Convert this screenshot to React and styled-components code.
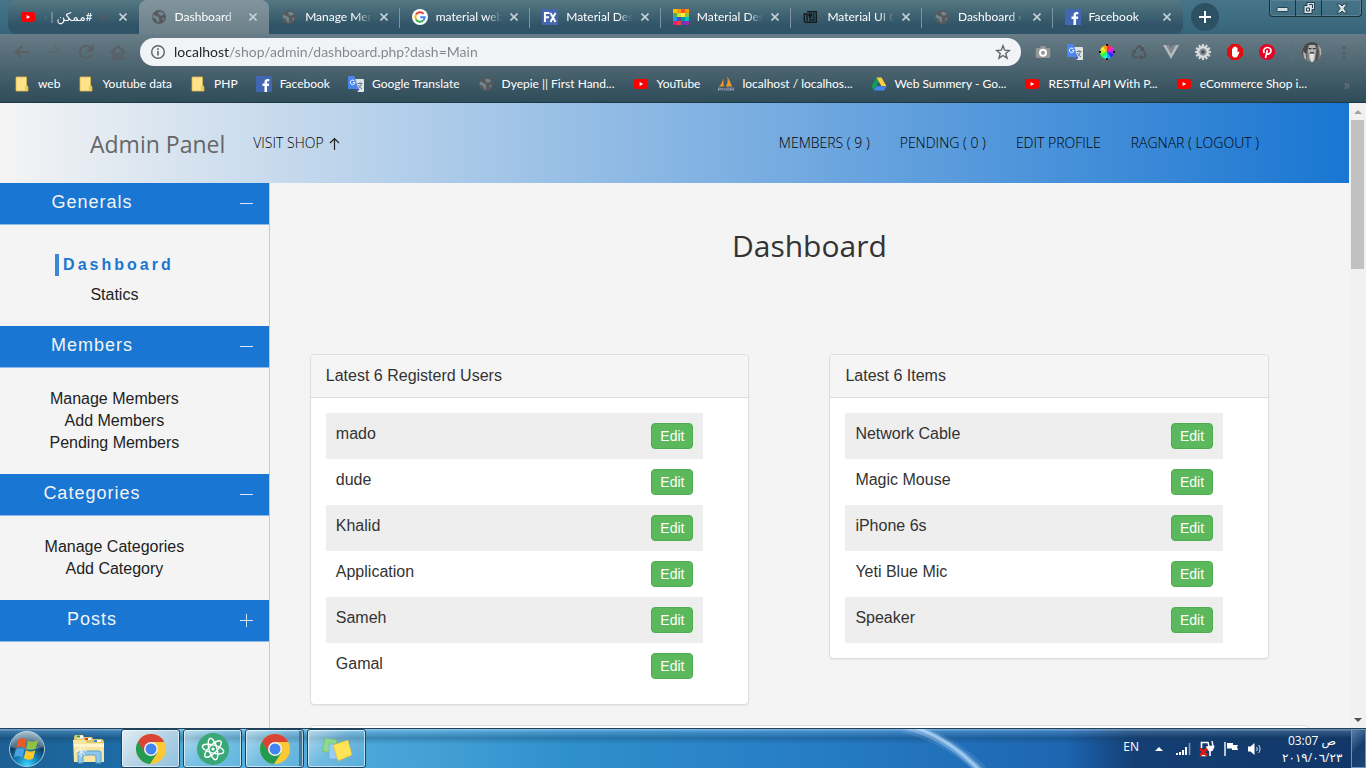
import React from "react";
import styled, { createGlobalStyle, css } from "styled-components";

const ui = `"Open Sans", "DejaVu Sans", sans-serif`;
const frame = `Lato, "DejaVu Sans", sans-serif`;
const sans = `"Liberation Sans", Arial, sans-serif`;

const Global = createGlobalStyle`
  *, *::before, *::after { box-sizing: border-box; }
  body { margin: 0; background: #f3f3f3; font-family: ${sans}; color: #333; }
  button { font: inherit; color: inherit; border: 0; padding: 0; background: none; cursor: pointer; }
  a { color: inherit; text-decoration: none; }
  ul { list-style: none; margin: 0; padding: 0; }
  svg { display: block; flex: none; }
`;

/* ---------- icons ---------- */

const Youtube = () => (
  <svg width="16" height="16" viewBox="0 0 16 16">
    <rect x="1" y="3" width="14" height="10" rx="2.4" fill="#f00" />
    <path d="M6.6 6v4l3.6-2z" fill="#fff" />
  </svg>
);
const Globe = () => (
  <svg width="16" height="16" viewBox="0 0 16 16">
    <circle cx="8" cy="8" r="7" fill="#57595c" />
    <path d="M2 5.500C3 6 4 6 5 7c1.500.5 3 .5 3 2S7.500 11 8.500 13.500C6.500 13.500 5.500 12 5 10 3.500 9.500 2 9 1.500 8zM7 3.500C9 2 12 3 13 5.500 12 6 10.500 5.500 10 7 8.500 7 9 5.500 7.500 5.500zM11 9.500l2.500-.8-1 3z" fill="#6f858f" />
  </svg>
);
const Google = () => (
  <svg width="16" height="16" viewBox="0 0 16 16">
    <circle cx="8" cy="8" r="8" fill="#fff" />
    <g fill="none" strokeWidth="2">
      <path d="M11.6 4.8A4.7 4.7 0 0 0 4 5.6" stroke="#ea4335" />
      <path d="M4 5.6a4.7 4.7 0 0 0 0 4.8" stroke="#fbbc05" />
      <path d="M4 10.4a4.7 4.7 0 0 0 7.3 1" stroke="#34a853" />
      <path d="M11.3 11.4A4.7 4.7 0 0 0 12.7 8.200H8.200" stroke="#4285f4" />
    </g>
  </svg>
);
const Fx = () => (
  <svg width="16" height="16" viewBox="0 0 16 16">
    <rect width="16" height="16" fill="#4666b0" />
    <path d="M3 13V4h4.500M3 8.300h4M8.500 4l5 9M13.500 4l-5 9" fill="none" stroke="#fff" strokeWidth="1.900" />
  </svg>
);
const mosaic = [
  "#ffc107", "#ff9800", "#ff5722", "#ff9800",
  "#4caf50", "#cddc39", "#ffeb3b", "#8bc34a",
  "#2196f3", "#3f51b5", "#009688", "#00bcd4",
  "#e91e63", "#f44336", "#673ab7", "#9c27b0",
];
const Mosaic = () => (
  <svg width="16" height="16" viewBox="0 0 16 16">
    {mosaic.map((c, i) => (
      <rect key={i} x={(i % 4) * 4} y={Math.floor(i / 4) * 4} width="4" height="4" fill={c} />
    ))}
  </svg>
);
const Newspaper = () => (
  <svg width="16" height="16" viewBox="0 0 16 16" fill="none" stroke="#14191c" strokeWidth="1.400">
    <path d="M4 2.700h9.300v10.600H2.700a1.400 1.400 0 0 1-1.400-1.400V5H4v7" />
    <path d="M6 8.800h2.500M9.700 5h2M9.700 7h2M9.700 9h2M6 11h5.700" />
    <rect x="6" y="5" width="2.300" height="2" fill="#14191c" />
  </svg>
);
const Facebook = () => (
  <svg width="16" height="16" viewBox="0 0 16 16">
    <rect width="16" height="16" fill="#4267b2" />
    <path d="M8.500 16v-6H6.500V7.600h2V6c0-2 1.200-3 3-3h1.800v2.200H12c-.8 0-1 .4-1 1v1.400h2.200l-.3 2.400H11v6z" fill="#fff" />
  </svg>
);
const Translate = () => (
  <svg width="16" height="16" viewBox="0 0 16 16">
    <path d="M6 3h9.300a.7.700 0 0 1 .7.700v11.600a.7.700 0 0 1-.7.700H9.500z" fill="#dfe3e6" />
    <path d="M9.500 7.500h5M12 6v1.500M10 12.500c2-1 3-3 3.300-5M10.500 9c.6 1.600 2 3 3.500 3.800" stroke="#6b7b86" fill="none" />
    <path d="M.7 0h5.600L10.500 13H.7A.7.700 0 0 1 0 12.300V.7A.7.700 0 0 1 .7 0z" fill="#4a86ee" />
    <path d="M8.500 13h3L9.500 16z" fill="#2a56c6" />
    <path d="M6.600 5.200a2.300 2.300 0 1 0 .3 1.500H4.800" fill="none" stroke="#fff" strokeWidth="1" />
  </svg>
);
const Folder = () => (
  <svg width="16" height="16" viewBox="0 0 16 16">
    <path d="M2 1h10.500v8.500L14 11v4H2z" fill="#ffe38a" stroke="#d8b64a" strokeWidth=".8" />
    <path d="M11 14.500v-4l3-1v5z" fill="#f0c64e" />
  </svg>
);
const Pma = () => (
  <svg width="16" height="16" viewBox="0 0 16 16">
    <path d="M5 1.500C5 5 3.500 8.500 1 10.500h5zM9 .5c1 3.500 1 7-1.500 10h6.500C12.500 7 11.500 3 9 .5z" fill="#f0962e" />
    <path d="M.5 15v-3h2v1.500h-2M4 15v-3l1.500 1.500L7 12v3M9 15v-3h2v3M12.500 15v-3h3v3M13 13.500h2" fill="none" stroke="#8f91ae" />
  </svg>
);
const Drive = () => (
  <svg width="16" height="16" viewBox="0 0 16 16">
    <path d="M5.500 1.500.5 10.300 3 14.500l5-8.700z" fill="#0f9d58" />
    <path d="M5.500 1.500h5l5 8.800h-5z" fill="#ffcd40" />
    <path d="M5.400 10.300h10.100L13 14.500H3z" fill="#4285f4" />
  </svg>
);
const Close = () => (
  <svg width="8" height="8" viewBox="0 0 8 8">
    <path d="m.5.500 7 7m0-7-7 7" stroke="#c5d0d5" strokeWidth="1.600" />
  </svg>
);
const Sound = () => (
  <svg width="10" height="10" viewBox="0 0 10 10">
    <path d="M0 3.500h2L4.500 1v8L2 6.500H0z" fill="#555b60" />
    <path d="M6 3c1 1 1 3 0 4M7.500 1.500c2 2 2 5 0 7" fill="none" stroke="#555b60" />
  </svg>
);

const NavIcon = ({ d, dim }) => (
  <svg width="16" height="16" viewBox="0 0 16 16">
    <path d={d} fill="none" stroke={dim ? "#5b6a71" : "#5a5f63"} strokeWidth="2" />
  </svg>
);
const navIcons = [
  { label: "Back", d: "M15 8H2.500M8 2 2 8l6 6" },
  { label: "Forward", d: "M1 8h12.500M8 2l6 6-6 6", dim: true },
  { label: "Reload", d: "M13.300 10.500A6 6 0 1 1 12.500 4L14 5.500M14.500 1v5.500H9" },
  { label: "Home", d: "M1 8.500 8 2l7 6.500M3.500 7v7.500H6.500V10h3v4.500h3V7" },
];

const Camera = () => (
  <svg width="16" height="16" viewBox="0 0 16 16">
    <path d="M2 4h3l1-2h4l1 2h3a1.300 1.300 0 0 1 1.300 1.300v7A1.500 1.500 0 0 1 13.800 14H2.200A1.500 1.500 0 0 1 .7 12.500V5.300A1.300 1.300 0 0 1 2 4z" fill="#969696" />
    <circle cx="8" cy="8.700" r="4" fill="#fff" />
    <circle cx="8" cy="8.700" r="2" fill="#969696" />
  </svg>
);
const wheelColors = ["#ff2a2a", "#ff1fd0", "#a31fff", "#2a2aff", "#1fa9ff", "#1fffd0", "#1fff3a", "#a8ff1f", "#ffe91f", "#ff961f"];
const Wheel = () => (
  <svg width="16" height="16" viewBox="-8 -8 16 16">
    {wheelColors.map((c, i) => (
      <path key={c} d="M0 0V-7A7 7 0 0 1 4.300-5.600z" fill={c} transform={`rotate(${i * 36})`} />
    ))}
    <path d="M0-8v2M0 6v2M-8 0h2M6 0h2" stroke="#111" strokeWidth="2" />
  </svg>
);
const Recycle = () => (
  <svg width="16" height="16" viewBox="0 0 24 24" fill="none" stroke="#505659" strokeWidth="3">
    <path d="M8 8l3.500-5h2L17 8M18 5v4h-4M19 11l3 5-2 4h-6M16 17l-3 3 3 3M10 20H4l-2-4 3-5M2 12l4-2 1 4" />
  </svg>
);
const Vue = () => (
  <svg width="16" height="16" viewBox="0 0 16 16">
    <path d="M0 1h3.200L8 9.500 12.800 1H16L8 15z" fill="#b4b9bb" />
    <path d="M3.200 1h3L8 4.200 9.800 1h3L8 9.500z" fill="#83898c" />
  </svg>
);
const Gear = () => (
  <svg width="16" height="16" viewBox="-8 -8 16 16">
    {[...Array(12)].map((_, i) => (
      <rect key={i} x="-1.100" y="-8" width="2.200" height="4" fill="#d3d5d6" transform={`rotate(${i * 30})`} />
    ))}
    <circle r="4.800" fill="none" stroke="#d9dadb" strokeWidth="2.600" />
    <circle r="3.200" fill="#8b9092" />
    <circle r="1.700" fill="#3f484d" />
  </svg>
);
const AdStop = () => (
  <svg width="16" height="16" viewBox="0 0 16 16">
    <path d="M4.700 0h6.600L16 4.700v6.600L11.300 16H4.700L0 11.300V4.700z" fill="#e40d0d" />
    <path d="M5 8V4.500h1.300V3h1.400v-.600h1.400V3.500h1.400V8.500l1-1 1 .5-2 4.500-1.500 1H6.500L5 11.500z" fill="#fff" />
  </svg>
);
const Pinterest = () => (
  <svg width="16" height="16" viewBox="0 0 16 16">
    <circle cx="8" cy="8" r="8" fill="#e60023" />
    <path d="M6.500 14 8.400 6M5.400 9C3.600 6.500 5.500 3.500 8.400 3.500c3 0 4.100 2.300 3.300 4.500-.9 2.600-3.600 2.800-4.200 1" fill="none" stroke="#fff" strokeWidth="1.700" />
  </svg>
);
const Avatar = () => (
  <svg width="20" height="20" viewBox="0 0 20 20">
    <clipPath id="face"><circle cx="10" cy="10" r="10" /></clipPath>
    <g clipPath="url(#face)">
      <rect width="20" height="20" fill="#7d7d7d" />
      <path d="M4 0h12l-1 7-2-4H7L5 9 4 20H0V8z" fill="#484848" />
      <path d="M15 5l2 4-1 11h-3l1-8z" fill="#525252" />
      <path d="M7 3h6l1 5-1.500 10h-5L6 8z" fill="#b4b4b4" />
      <path d="M6.500 6h3v1.200h-3zM10.800 6h3v1.200h-3z" fill="#383838" />
      <path d="M8 10h4l.5 1.500h-5z" fill="#4c4c4c" />
      <path d="M7.500 12h5L11 20H9z" fill="#e2e2e2" />
      <path d="M1 9l3 3v6H2zM17 4l2 3v6h-1z" fill="#b0b0b0" />
    </g>
  </svg>
);
const extensions = [
  ["Screenshot", Camera], ["Translate", Translate], ["Colour picker", Wheel], ["Recycle", Recycle],
  ["Vue", Vue], ["Settings", Gear], ["Block ads", AdStop], ["Save pin", Pinterest],
];

/* ---------- browser frame ---------- */

const Desktop = styled.div`
  display: flex;
  flex-direction: column;
  height: 100vh;
  overflow: hidden;
`;
const TabStrip = styled.div`
  display: flex;
  height: 34px;
  padding-left: 8px;
  background: linear-gradient(#477489, #36657a);
  font: 12px/16px ${frame};
  color: #fff;
`;
const Tabs = styled.div`
  display: flex;
  flex: 1;
  min-width: 0;
  background: linear-gradient(#557883, #305467 75%);
  border-radius: 8px 8px 8px 8px;
`;
const Tab = styled.div`
  display: flex;
  align-items: center;
  flex: 1 1 0;
  min-width: 0;
  padding: 0 12px;
  position: relative;
  ${(p) => p.$active && css`
    background: linear-gradient(#82959e, #6b808a);
    border-radius: 8px 8px 0 0;
  `}
  ${(p) => p.$divider && css`
    &::after {
      content: "";
      position: absolute;
      right: 0;
      top: 8px;
      height: 20px;
      width: 1px;
      background: #7c929c;
    }
  `}
`;
const TabTitle = styled.span`
  flex: 1;
  min-width: 0;
  margin: ${(p) => (p.dir === "rtl" ? "0 8px" : "0 0 0 8px")};
  overflow: hidden;
  white-space: nowrap;
  mask-image: linear-gradient(${(p) => (p.dir === "rtl" ? "270deg" : "90deg")}, #000 calc(100% - 16px), transparent);
`;
const TabClose = styled.button`
  display: grid;
  place-items: center;
  width: 8px;
  height: 16px;
  margin-left: 8px;
`;
const StripEnd = styled.div`
  display: flex;
  justify-content: space-between;
  align-items: flex-start;
  width: 183px;
  padding: 0 4px 0 8px;
`;
const NewTab = styled.button`
  display: grid;
  place-items: center;
  width: 28px;
  height: 28px;
  margin-top: 3px;
  border-radius: 50%;
  background: #2d5163;
`;
const WindowButtons = styled.div`
  display: grid;
  grid-template-columns: 25px 26px 40px;
  height: 17px;
  border: 1px solid #1b333e;
  border-top: 0;
  border-radius: 0 0 4px 4px;
  box-shadow: inset 0 0 0 1px #5c8292;
`;
const WindowButton = styled.button`
  display: grid;
  place-items: center;
  & + & { border-left: 1px solid #1b333e; }
`;
const ToolArea = styled.div`
  background: linear-gradient(#677c86, #2f4c59);
  border-bottom: 1px solid #1c3945;
  color: #fff;
`;
const Toolbar = styled.div`
  display: flex;
  align-items: center;
  height: 36px;
  padding: 0 14px;
`;
const IconButton = styled.button`
  display: grid;
  place-items: center;
  width: 16px;
  height: 20px;
  margin-right: 16px;
`;
const Omnibox = styled.div`
  display: flex;
  align-items: center;
  flex: 1;
  height: 28px;
  margin: 0 14px 0 -2px;
  padding: 0 10px;
  border-radius: 14px;
  background: #f1f3f6;
`;
const Address = styled.input`
  flex: 1;
  min-width: 0;
  margin: 0 8px;
  padding: 0;
  border: 0;
  outline: 0;
  font: 14px/20px ${frame};
  color: transparent;
  background: linear-gradient(90deg, #202124 55px, #80868b 55px);
  background-clip: text;
`;
const Profile = styled.div`
  display: flex;
  align-items: center;
  gap: 14px;
  height: 20px;
  padding-left: 10px;
  border-left: 1px solid #5d7079;
`;
const Bookmarks = styled.nav`
  display: flex;
  align-items: center;
  height: 32px;
  padding: 0 16px 4px 14px;
  font: 12px/16px ${frame};
`;
const Bookmark = styled.a`
  display: flex;
  align-items: center;
  gap: 8px;
  margin-right: 18px;
  white-space: nowrap;
`;
const More = styled.button`
  margin-left: auto;
  color: #6b757b;
  font-size: 16px;
`;

const tabs = [
  { title: "#ممكن | حلقة", Icon: Youtube, rtl: true, sound: true },
  { title: "Dashboard", Icon: Globe, active: true },
  { title: "Manage Members", Icon: Globe, divider: true },
  { title: "material web design", Icon: Google, divider: true },
  { title: "Material Design", Icon: Fx, divider: true },
  { title: "Material Design", Icon: Mosaic, divider: true },
  { title: "Material UI Components", Icon: Newspaper, divider: true },
  { title: "Dashboard \u2039 shop", Icon: Globe, divider: true },
  { title: "Facebook", Icon: Facebook },
];
const bookmarks = [
  ["web", Folder], ["Youtube data", Folder], ["PHP", Folder], ["Facebook", Facebook],
  ["Google Translate", Translate], ["Dyepie || First Hand...", Globe], ["YouTube", Youtube],
  ["localhost / localhos...", Pma], ["Web Summery - Go...", Drive],
  ["RESTful API With P...", Youtube], ["eCommerce Shop i...", Youtube],
];

const Browser = () => (
  <>
    <TabStrip>
      <Tabs>
        {tabs.map(({ title, Icon, active, divider, rtl, sound }, i) => (
          <Tab key={i} $active={active} $divider={divider}>
            <Icon />
            <TabTitle dir={rtl ? "rtl" : "ltr"}>{title}</TabTitle>
            {sound && <Sound />}
            <TabClose aria-label={`Close ${title}`}><Close /></TabClose>
          </Tab>
        ))}
      </Tabs>
      <StripEnd>
        <NewTab aria-label="New tab">
          <svg width="12" height="12" viewBox="0 0 12 12"><path d="M6 0v12M0 6h12" stroke="#fff" strokeWidth="2" /></svg>
        </NewTab>
        <WindowButtons>
          <WindowButton aria-label="Minimize">
            <svg width="13" height="12" viewBox="0 0 13 12"><rect x="1" y="5.500" width="11" height="4" rx="1" fill="#d6e0e4" stroke="#26424e" /></svg>
          </WindowButton>
          <WindowButton aria-label="Restore">
            <svg width="14" height="14" viewBox="0 0 14 14">
              <path d="M5 1.500h7.500v7H10v4H2v-8h3z" fill="#d6e0e4" stroke="#26424e" />
              <path d="M4.500 7h3v3h-3zM7 3.500h3.500V7" fill="none" stroke="#26424e" />
            </svg>
          </WindowButton>
          <WindowButton aria-label="Close">
            <svg width="12" height="11" viewBox="0 0 12 11">
              <path d="M1 1h3l2 2 2-2h3L8 5.500 11 10H8L6 8l-2 2H1l3-4.500z" fill="#d6e0e4" stroke="#26424e" />
            </svg>
          </WindowButton>
        </WindowButtons>
      </StripEnd>
    </TabStrip>
    <ToolArea>
      <Toolbar>
        {navIcons.map(({ label, d, dim }) => (
          <IconButton key={label} aria-label={label}><NavIcon d={d} dim={dim} /></IconButton>
        ))}
        <Omnibox>
          <svg width="16" height="16" viewBox="0 0 16 16">
            <circle cx="8" cy="8" r="6.300" fill="none" stroke="#5f6368" strokeWidth="1.400" />
            <path d="M8 7v4.500M8 4.300v1.600" stroke="#5f6368" strokeWidth="1.600" />
          </svg>
          <Address aria-label="Address" defaultValue="localhost/shop/admin/dashboard.php?dash=Main" />
          <svg width="16" height="16" viewBox="0 0 16 16">
            <path d="m8 1.800 1.700 4.400 4.700.300-3.600 3 1.200 4.600L8 11.500l-4 2.600 1.200-4.600-3.600-3 4.700-.300z" fill="none" stroke="#5f6368" strokeWidth="1.400" />
          </svg>
        </Omnibox>
        {extensions.map(([label, Icon]) => (
          <IconButton key={label} aria-label={label}><Icon /></IconButton>
        ))}
        <Profile>
          <Avatar />
          <svg width="16" height="16" viewBox="0 0 16 16" fill="#575f64">
            <rect x="6.500" y="2" width="3" height="3" /><rect x="6.500" y="7" width="3" height="3" /><rect x="6.500" y="12" width="3" height="3" />
          </svg>
        </Profile>
      </Toolbar>
      <Bookmarks aria-label="Bookmarks">
        {bookmarks.map(([label, Icon]) => (
          <Bookmark key={label} href="#"><Icon />{label}</Bookmark>
        ))}
        <More aria-label="More bookmarks">»</More>
      </Bookmarks>
    </ToolArea>
  </>
);

/* ---------- admin page ---------- */

const Viewport = styled.div`
  display: flex;
  flex: 1;
  min-height: 0;
  background: #f4f4f4;
`;
const Page = styled.div`
  display: flex;
  flex-direction: column;
  flex: 1;
  min-width: 0;
  overflow: hidden;
`;
const Header = styled.header`
  display: flex;
  flex: none;
  align-items: center;
  height: 80px;
  padding: 0 90px;
  background: linear-gradient(90deg, #f4f4f4, #1976d2);
  font: 300 14px/20px ${ui};
  color: #000;
`;
const Brand = styled.a`
  margin-right: 28px;
  font-size: 23px;
  font-weight: 400;
  line-height: 32px;
  color: #666;
  padding-top: 2px;
`;
const VisitLink = styled.a`
  display: flex;
  align-items: center;
  gap: 5px;
`;
const Menu = styled.nav`
  display: flex;
  gap: 30px;
  margin-left: auto;
`;
const Columns = styled.div`
  display: grid;
  grid-template-columns: 1fr 4fr;
  flex: 1;
  min-height: 0;
`;
const Sidebar = styled.aside`
  border-right: 1px solid #c8c8c8;
`;
const SectionHead = styled.button`
  display: flex;
  align-items: center;
  width: 100%;
  height: 42px;
  padding-right: 16px;
  border-bottom: 1px solid #8fbbe8;
  background: #1976d2;
  color: #f4f4f4;
  font: 18px/24px ${sans};
  letter-spacing: 1px;
`;
const SectionTitle = styled.span`
  flex: 1;
  padding: 0 56px 3px 0;
  text-align: center;
`;
const SectionList = styled.ul`
  padding: ${(p) => (p.$roomy ? "29px 40px 20px 0" : "20px 40px 20px 0")};
  font-size: 16px;
  line-height: 22px;
  text-align: center;
  color: #222;
`;
const CurrentItem = styled.li`
  margin-bottom: 8px;
  a {
    display: inline-block;
    padding-left: 4px;
    border-left: 4px solid #3c87d6;
    color: #1976d2;
    font-weight: 700;
    letter-spacing: 3px;
  }
`;
const Main = styled.main`
  padding: 0 40px;
  min-width: 0;
`;
const Heading = styled.h1`
  margin: 0;
  padding: 41px 0 87px;
  text-align: center;
  font: 400 30px/43px ${ui};
  color: #333;
`;
const Panels = styled.div`
  display: grid;
  grid-template-columns: 1fr 1fr;
  align-items: start;
  gap: 80px;
  padding-right: 40px;
`;
const Panel = styled.section`
  border: 1px solid #ddd;
  border-radius: 4px;
  background: #fff;
  box-shadow: 0 1px 1px rgba(0, 0, 0, 0.05);
`;
const PanelTitle = styled.h2`
  margin: 0;
  padding: 10px 15px;
  border-bottom: 1px solid #ddd;
  border-radius: 3px 3px 0 0;
  background: #f5f5f5;
  font: 400 16px/22px ${sans};
`;
const PanelList = styled.ul`
  padding: 15px 45px 15px 15px;
`;
const PanelRow = styled.li`
  display: flex;
  justify-content: space-between;
  height: 46px;
  padding: 10px;
  font-size: 16px;
  line-height: 22px;
  &:nth-child(odd) { background: #eee; }
`;
const EditButton = styled.button`
  width: 42px;
  height: 26px;
  border: 1px solid #4cae4c;
  border-radius: 4px;
  background: #5cb85c;
  color: #fff;
  font: 14px/20px ${sans};
`;
const NextPanel = styled(Panel)`
  height: 60px;
  margin-top: 20px;
`;
const Scrollbar = styled.div`
  display: flex;
  flex-direction: column;
  align-items: center;
  width: 17px;
  background: #f1f1f1;
`;
const ScrollArrow = styled.div`
  display: grid;
  place-items: center;
  height: 17px;
`;
const ScrollThumb = styled.div`
  width: 13px;
  height: 149px;
  margin-bottom: auto;
  background: #c1c1c1;
`;

const sections = [
  { title: "Generals", open: true, items: ["Dashboard", "Statics"] },
  { title: "Members", open: true, items: ["Manage Members", "Add Members", "Pending Members"] },
  { title: "Categories", open: true, items: ["Manage Categories", "Add Category"] },
  { title: "Posts", open: false, items: [] },
];
const panels = [
  { title: "Latest 6 Registerd Users", rows: ["mado", "dude", "Khalid", "Application", "Sameh", "Gamal"] },
  { title: "Latest 6 Items", rows: ["Network Cable", "Magic Mouse", "iPhone 6s", "Yeti Blue Mic", "Speaker"] },
];

const AdminPage = () => (
  <Viewport>
    <Page>
      <Header>
        <Brand href="#">Admin Panel</Brand>
        <VisitLink href="#">
          VISIT SHOP
          <svg width="11" height="13" viewBox="0 0 11 13"><path d="M5.500 13V1.500M1 6l4.500-4.500L10 6" fill="none" stroke="#222" strokeWidth="1.200" /></svg>
        </VisitLink>
        <Menu>
          {["MEMBERS ( 9 )", "PENDING ( 0 )", "EDIT PROFILE", "RAGNAR ( LOGOUT )"].map((t) => <a key={t} href="#">{t}</a>)}
        </Menu>
      </Header>
      <Columns>
        <Sidebar>
          {sections.map(({ title, open, items }) => (
            <React.Fragment key={title}>
              <SectionHead aria-expanded={open}>
                <SectionTitle>{title}</SectionTitle>
                <svg width="13" height="13" viewBox="0 0 13 13">
                  <path d={open ? "M0 6.500h13" : "M0 6.500h13M6.500 0v13"} stroke="#d9e7f6" />
                </svg>
              </SectionHead>
              {open && (
                <SectionList $roomy={items[0] === "Dashboard"}>
                  {items.map((t) => t === "Dashboard"
                    ? <CurrentItem key={t}><a href="#" aria-current="page">{t}</a></CurrentItem>
                    : <li key={t}><a href="#">{t}</a></li>)}
                </SectionList>
              )}
            </React.Fragment>
          ))}
        </Sidebar>
        <Main>
          <Heading>Dashboard</Heading>
          <Panels>
            {panels.map(({ title, rows }) => (
              <Panel key={title}>
                <PanelTitle>{title}</PanelTitle>
                <PanelList>
                  {rows.map((r) => <PanelRow key={r}>{r}<EditButton>Edit</EditButton></PanelRow>)}
                </PanelList>
              </Panel>
            ))}
          </Panels>
          <NextPanel />
        </Main>
      </Columns>
    </Page>
    <Scrollbar>
      <ScrollArrow><svg width="8" height="4" viewBox="0 0 8 4"><path d="M0 4l4-4 4 4z" fill="#a3a3a3" /></svg></ScrollArrow>
      <ScrollThumb />
      <ScrollArrow><svg width="8" height="4" viewBox="0 0 8 4"><path d="M0 0l4 4 4-4z" fill="#505050" /></svg></ScrollArrow>
    </Scrollbar>
  </Viewport>
);

/* ---------- taskbar ---------- */

const Bar = styled.footer`
  display: flex;
  flex: none;
  align-items: stretch;
  height: 40px;
  padding-left: 8px;
  position: relative;
  border-top: 1px solid #24415a;
  background:
    linear-gradient(rgba(190, 220, 245, 0.5) 1px, rgba(160, 200, 230, 0.25) 2px, rgba(20, 60, 90, 0.3) 9px, transparent 15px),
    linear-gradient(90deg, #1c5f93, #1d6ba6 9%, #58b3dd 14%, #46a3d8 30%, #2f8fcb 42%, #267cc5 60%, #1d65b0 78%, #143f76 83%, #123a6c 92%, #12366a);
  color: #fff;
`;
const Streak = styled.svg`
  position: absolute;
  left: 66%;
  top: 0;
`;
const Start = styled.button`
  align-self: center;
  margin-right: 26px;
`;
const Pinned = styled.button`
  margin-right: 15px;
`;
const Task = styled.button`
  display: grid;
  place-items: center;
  width: 59px;
  height: 39px;
  margin-right: 3px;
  border: 1px solid #1b4460;
  border-radius: 3px;
  box-shadow: inset 0 0 0 1px rgba(255, 255, 255, 0.6)${(p) => (p.$stacked ? ", inset -4px 0 0 rgba(27, 68, 96, 0.5)" : "")};
  background: ${(p) => (p.$active
    ? "linear-gradient(135deg, #e3edf3, #b5d3e5 50%, #8fc0de)"
    : "linear-gradient(135deg, rgba(255,255,255,.55), rgba(255,255,255,.2) 45%, rgba(255,255,255,.08))")};
`;
const Tray = styled.div`
  display: flex;
  align-items: center;
  margin-left: auto;
  font: 12px/17px ${ui};
`;
const Lang = styled.button`
  margin: 0 16px 5px 0;
`;
const TrayIcons = styled.div`
  display: flex;
  align-items: center;
  gap: 8px;
`;
const Clock = styled.time`
  width: 60px;
  margin: 0 9px 0 19px;
  text-align: center;
  white-space: nowrap;
`;
const ShowDesktop = styled.button`
  align-self: stretch;
  width: 15px;
  border: 1px solid #6d93b8;
  background: linear-gradient(135deg, #5a7fa6, #173c6c 50%, #1b447a);
`;

const StartOrb = () => (
  <svg width="38" height="38" viewBox="0 0 38 38">
    <defs>
      <radialGradient id="orb" cx=".5" cy=".95" r=".9">
        <stop offset="0" stopColor="#37d5ff" /><stop offset=".35" stopColor="#1580b8" /><stop offset=".7" stopColor="#0f3b5e" /><stop offset="1" stopColor="#7da0b4" />
      </radialGradient>
    </defs>
    <circle cx="19" cy="19" r="17.500" fill="url(#orb)" stroke="#a9cbe0" />
    <path d="M3 17a16 16 0 0 1 32 0c-10 4-22 4-32 0z" fill="#fff" opacity=".25" />
    <path d="M10.500 9.500c3-1.700 5.500-1.600 8 .2l-1.800 8.300c-2.500-1.800-5-1.900-8.500-.3z" fill="#ea5a24" />
    <path d="M20 10.500c3 1.700 6 1.600 10-.2l-2.200 8.200c-3.500 1.700-6.500 1.600-9.600 0z" fill="#8fc33f" />
    <path d="M7.800 19.300c3-1.600 6-1.500 8.500.2l-1.900 8c-2.500-1.700-5.200-1.800-8.500-.1z" fill="#4aa2e6" />
    <path d="M17.800 20.300c3.200 1.700 6.300 1.600 9.600 0l-2.200 8.200c-3.200 1.700-6.300 1.500-9.300-.2z" fill="#ffc928" />
  </svg>
);
const Explorer = () => (
  <svg width="34" height="30" viewBox="0 0 34 30">
    <path d="M2 3l1-2h8l1 2h8l1 2h9l2 2v20H2z" fill="#e2c66b" />
    <path d="M5 1.500h6v3H5zM13 4h6v2h-6zM22 6h7v2h-7z" fill="#fff" />
    <path d="M5 1.500h3v2H5z" fill="#21a043" /><path d="M13 4h3v2h-3z" fill="#d9442f" /><path d="M22 6h3v2h-3z" fill="#3b86d6" />
    <path d="M1 6h12l2 3h17v19H2z" fill="#f7e6a2" />
    <path d="M2 10h30v3H2z" fill="#fff5ca" />
    <path d="M6 29V19q0-2 2-2h19q2 0 2 2v10h-5v-6q0-2-2-2h-9q-2 0-2 2v6z" fill="#8cc9ec" stroke="#5d9fc7" />
    <path d="M9 12v11M4 17h11M6 14l7 7M13 14l-7 7" stroke="#fff" opacity=".8" />
  </svg>
);
const Chrome = () => (
  <svg width="30" height="30" viewBox="0 0 30 30">
    <circle cx="15" cy="15" r="15" fill="#fbc934" />
    <path d="M15 15 21.500 18.500 14 30A15 15 0 0 1 2 7.500z" fill="#239c51" />
    <path d="M15 8h13.300A15 15 0 0 0 2 7.500L8.800 18.500z" fill="#da4437" />
    <circle cx="15" cy="15" r="7" fill="#f4f4f4" /><circle cx="15" cy="15" r="5.500" fill="#4384f3" />
  </svg>
);
const Atom = () => (
  <svg width="32" height="32" viewBox="0 0 32 32">
    <circle cx="16" cy="16" r="16" fill="#3aa876" />
    <g fill="none" stroke="#fff" strokeWidth="1.400">
      {[15, 75, 135].map((a) => <ellipse key={a} cx="16" cy="16" rx="11" ry="4" transform={`rotate(${a} 16 16)`} />)}
    </g>
    <circle cx="16" cy="16" r="1.600" fill="#fff" />
  </svg>
);
const Notes = () => (
  <svg width="32" height="26" viewBox="0 0 32 26">
    <path d="M4 2l12 2-2 14-13-3z" fill="#8fd98a" stroke="#6dbb6a" strokeWidth=".6" />
    <path d="M8 8h13v15H8z" fill="#9accf5" stroke="#70a9db" strokeWidth=".6" />
    <path d="M12 9l15-5 4 15-14 6z" fill="#ffe457" stroke="#d7b52d" strokeWidth=".6" />
  </svg>
);

const Taskbar = () => (
  <Bar>
    <Streak width="100" height="39" viewBox="0 0 100 39" aria-hidden="true">
      <path d="M2-2Q46 8 80 42" fill="none" stroke="#a9d3f8" strokeWidth="12" opacity=".15" />
      <path d="M6-2Q46 8 78 42" fill="none" stroke="#b5dafb" strokeWidth="7" opacity=".4" />
      <path d="M10-2Q46 8 78 42" fill="none" stroke="#c5e2fd" strokeWidth="3" opacity=".6" />
    </Streak>
    <Start aria-label="Start"><StartOrb /></Start>
    <Pinned aria-label="Explorer"><Explorer /></Pinned>
    <Task $active aria-label="Chrome"><Chrome /></Task>
    <Task aria-label="Atom"><Atom /></Task>
    <Task $stacked aria-label="Chrome windows"><Chrome /></Task>
    <Task aria-label="Sticky notes"><Notes /></Task>
    <Tray>
      <Lang>EN</Lang>
      <TrayIcons>
        <svg width="8" height="4" viewBox="0 0 8 4"><path d="M0 4l4-4 4 4z" fill="#fff" /></svg>
        <svg width="20" height="16" viewBox="-4 0 20 16">
          <path d="M2 14v-2M5 14v-3M8 14V9M11 14V6" stroke="#fff" strokeWidth="2" /><path d="M14.500 14V2" stroke="#7e9aba" strokeWidth="1.600" />
        </svg>
        <svg width="16" height="16" viewBox="0 0 16 16">
          <path d="M9 1.500H2.500V7M2.500 12v2.500H8" fill="none" stroke="#fff" strokeWidth="1.600" />
          <path d="M9 1l.8 4M13 0l.8 4" stroke="#fff" strokeWidth="1.400" />
          <path d="M7 5.500l8-1.500.5 2-2 4-3 .5L7.500 8z" fill="#fff" /><path d="M11 10v5" stroke="#fff" strokeWidth="1.600" />
          <path d="M1 7.500l7 7M8 7.500l-7 7" stroke="#e0190f" strokeWidth="2.600" />
        </svg>
        <svg width="16" height="16" viewBox="0 0 16 16">
          <path d="M2 1v14" stroke="#fff" strokeWidth="1.400" /><path d="M4 2h6v2h5l-1 2 1 3h-6V7.500H4z" fill="#fff" />
        </svg>
        <svg width="16" height="16" viewBox="0 0 16 16">
          <path d="M1 5.500h2.500L7.500 2v12L3.500 10.500H1z" fill="#fff" />
          <path d="M9.500 6c1 1.200 1 2.800 0 4M11.500 4c2 2.400 2 5.600 0 8" fill="none" stroke="#dce7f2" />
        </svg>
      </TrayIcons>
      <Clock>03:07 ص<br />٢٠١٩/٠٦/٢٣</Clock>
      <ShowDesktop aria-label="Show desktop" />
    </Tray>
  </Bar>
);

export default function App() {
  return (
    <Desktop>
      <Global />
      <Browser />
      <AdminPage />
      <Taskbar />
    </Desktop>
  );
}
